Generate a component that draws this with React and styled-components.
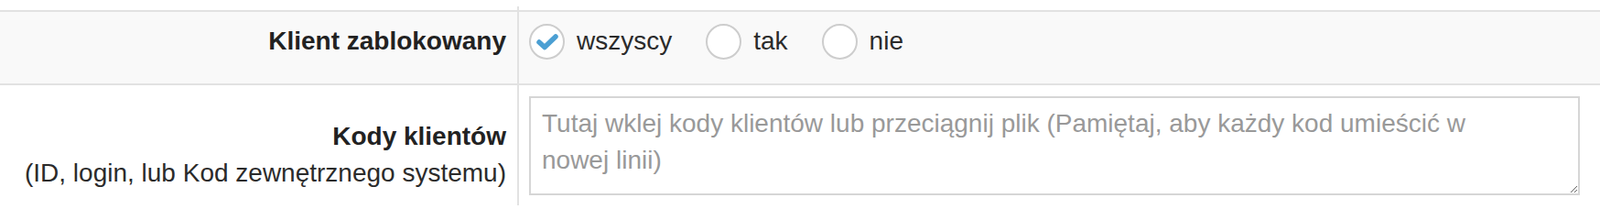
import React from "react";
import styled, { createGlobalStyle } from "styled-components";

const Global = createGlobalStyle`
  html, body { margin: 0; padding: 0; background: #fff; }
  body {
    font-family: "Liberation Sans", Arial, sans-serif;
    font-size: 28px;
    line-height: 40px;
    color: #2b2b2b;
  }
  * { box-sizing: border-box; }
`;

const Table = styled.div`
  margin-top: 7px;
  width: 1748px;
`;

const Row = styled.div`
  display: grid;
  grid-template-columns: 567px 1fr;
  background: ${(p) => (p.$shaded ? "#f9f9f9" : "#fff")};
  border-top: ${(p) => (p.$stub ? "none" : "2px solid #e2e2e2")};
  height: ${(p) => p.$h}px;
`;

const LabelCell = styled.div`
  border-right: 2px solid #e2e2e2;
  text-align: right;
  padding: ${(p) => p.$pt || 0}px 12px 0 0;
`;

const ValueCell = styled.div`
  padding: ${(p) => p.$pt || 0}px 22px 0 11px;
`;

const Label = styled.div`
  font-weight: bold;
  color: #222;
`;

const Hint = styled.div`
  font-weight: normal;
  color: #2b2b2b;
`;

const RadioGroup = styled.div`
  display: flex;
  align-items: center;
  gap: 37px;
`;

const RadioOption = styled.label`
  display: flex;
  align-items: center;
  gap: 13px;
  cursor: pointer;
  color: #2b2b2b;
  input { display: none; }
`;

const Circle = styled.span`
  width: 39px;
  height: 39px;
  border-radius: 50%;
  border: 2px solid #cdcdcd;
  background: #fff;
  display: flex;
  align-items: center;
  justify-content: center;
  svg { display: block; }
`;

const CodesArea = styled.textarea`
  display: block;
  width: 1148px;
  height: 108px;
  border: 2px solid #d6d6d6;
  border-radius: 0;
  padding: 8px 60px 8px 12px;
  font-family: "Liberation Sans", Arial, sans-serif;
  font-size: 28px;
  line-height: 40px;
  color: #333;
  background: #fff;
  resize: vertical;
  outline: none;
  &::placeholder { color: #999; }
`;

const options = [
  { value: "all", label: "wszyscy", checked: true },
  { value: "yes", label: "tak", checked: false },
  { value: "no", label: "nie", checked: false },
];

function Radio({ label, checked, value }) {
  return (
    <RadioOption>
      <input type="radio" name="blocked" value={value} defaultChecked={checked} />
      <Circle>
        {checked && (
          <svg width="35" height="35" viewBox="0 0 35 35">
            <polyline
              points="9,18 15,23.5 27,12"
              fill="none"
              stroke="#4b9fd3"
              strokeWidth="5.5"
              strokeLinecap="round"
              strokeLinejoin="round"
            />
          </svg>
        )}
      </Circle>
      <span>{label}</span>
    </RadioOption>
  );
}

export default function App() {
  return (
    <>
      <Global />
      <Table>
        <Row $stub $h={4}>
          <LabelCell />
          <ValueCell />
        </Row>
        <Row $shaded $h={80}>
          <LabelCell $pt={12}>
            <Label>Klient zablokowany</Label>
          </LabelCell>
          <ValueCell $pt={12}>
            <RadioGroup>
              {options.map((o) => (
                <Radio key={o.value} {...o} />
              ))}
            </RadioGroup>
          </ValueCell>
        </Row>
        <Row $h={133}>
          <LabelCell $pt={36}>
            <Label>Kody klientów</Label>
            <Hint>(ID, login, lub Kod zewnętrznego systemu)</Hint>
          </LabelCell>
          <ValueCell $pt={12}>
            <CodesArea placeholder="Tutaj wklej kody klientów lub przeciągnij plik (Pamiętaj, aby każdy kod umieścić w nowej linii)" />
          </ValueCell>
        </Row>
      </Table>
    </>
  );
}
